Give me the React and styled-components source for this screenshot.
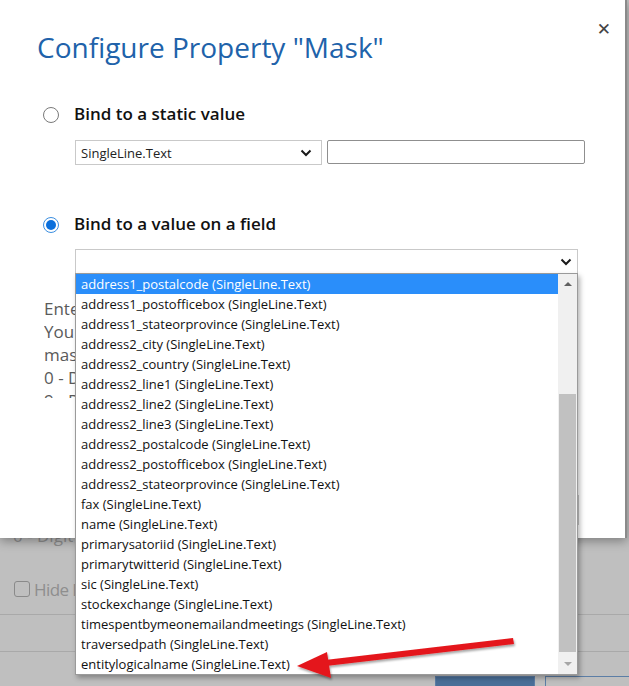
import React from "react"
import styled, { createGlobalStyle } from "styled-components"

const GlobalStyle = createGlobalStyle`
  html, body {
    margin: 0;
    padding: 0;
  }
  body {
    font-family: "Segoe UI", "Open Sans", sans-serif;
    background: #bfbfbf;
    overflow: hidden;
  }
`

const Screen = styled.div`
  position: relative;
  width: 629px;
  height: 686px;
  overflow: hidden;
  background: #bfbfbf;
`

// page behind the modal (dimmed)
const BackPage = styled.div`
  display: flex;
  flex-direction: column;
  padding-top: 525px;
  color: #8e8e8e;
  font-size: 17px;
`
const BackLine = styled.div`
  padding-left: 13px;
  line-height: 22px;
`
const CheckRow = styled.div`
  display: flex;
  align-items: center;
  gap: 4px;
  margin-top: 31px;
  padding-left: 14px;
  height: 22px;
  letter-spacing: -0.6px;
`
const CheckBox = styled.span`
  width: 14px;
  height: 14px;
  border: 1px solid #8a8a8a;
  border-radius: 3px;
`
const Divider = styled.div`
  height: 1px;
  background: #a9a9a9;
  margin-top: ${p => p.$gap}px;
`
const ButtonBar = styled.div`
  display: flex;
  gap: 10px;
  margin-top: 24px;
  padding-left: 435px;
`
const BackButton = styled.div`
  width: 100px;
  height: 30px;
  flex-shrink: 0;
  background: ${p => (p.$primary ? "#4a6f98" : "transparent")};
  border: 1px solid #5c7ea6;
  box-sizing: border-box;
`

// modal
const Dialog = styled.div`
  position: absolute;
  top: 0;
  left: 0;
  width: 627px;
  height: 538px;
  background: #fff;
  border-right: 2px solid #8a8a8a;
  box-sizing: border-box;
  box-shadow: 0 3px 10px rgba(0, 0, 0, 0.35);
`
const Title = styled.h1`
  margin: 0;
  padding: 29px 0 0 37px;
  font-size: 28px;
  line-height: 36px;
  font-weight: 400;
  color: #2062aa;
`
const CloseButton = styled.div`
  position: absolute;
  top: 18px;
  right: 14px;
  font-size: 17px;
  line-height: 22px;
  font-weight: 700;
  color: #444;
  font-family: "DejaVu Sans", sans-serif;
`
const Body = styled.div`
  display: flex;
  flex-direction: column;
  padding-left: 43px;
`
const OptionRow = styled.label`
  display: flex;
  align-items: center;
  gap: 15px;
  height: 24px;
  margin-top: ${p => p.$gap}px;
`
const Radio = styled.span`
  width: 16px;
  height: 16px;
  margin-top: 3px;
  border-radius: 50%;
  box-sizing: border-box;
  border: 1px solid ${p => (p.$checked ? "#3b8ee0" : "#7a7a7a")};
  display: flex;
  align-items: center;
  justify-content: center;
  &::after {
    content: "";
    display: ${p => (p.$checked ? "block" : "none")};
    width: 10px;
    height: 10px;
    border-radius: 50%;
    background: #0a6fdc;
  }
`
const OptionLabel = styled.span`
  font-size: 17px;
  font-weight: 600;
  color: #111;
`
const FieldRow = styled.div`
  display: flex;
  gap: 5px;
  margin-left: 32px;
  margin-top: ${p => p.$gap}px;
`
const SelectBox = styled.div`
  position: relative;
  display: flex;
  align-items: center;
  justify-content: space-between;
  width: ${p => p.$width}px;
  height: ${p => p.$height}px;
  box-sizing: border-box;
  border: 1px solid #c9c9c9;
  padding: 0 ${p => p.$padRight}px 0 5px;
  font-size: 13px;
  color: #222;
`
const TextInput = styled.div`
  width: 258px;
  height: 24px;
  box-sizing: border-box;
  border: 1px solid #8f8f8f;
  border-radius: 2px;
`
const HelpText = styled.div`
  margin-top: 23px;
  margin-left: 1px;
  height: 101px;
  overflow: hidden;
  font-size: 17px;
  line-height: 23px;
  color: #5a5a5a;
`
const DialogFooter = styled.div`
  display: flex;
  justify-content: flex-end;
  padding-right: 46px;
  margin-top: 97px;
`
const FooterButton = styled.div`
  width: 100px;
  height: 30px;
  box-sizing: border-box;
  border: 1px solid #c9c9c9;
`

// dropdown list
const DropList = styled.div`
  position: absolute;
  top: 100%;
  left: -1px;
  width: 503px;
  box-sizing: border-box;
  display: flex;
  background: #fff;
  border: 1px solid #9a9a9a;
  box-shadow: 2px 3px 5px rgba(0, 0, 0, 0.3);
  z-index: 5;
`
const Items = styled.div`
  flex: 1;
  display: flex;
  flex-direction: column;
`
const Item = styled.div`
  height: 20px;
  line-height: 20px;
  padding-left: 5px;
  font-size: 13px;
  white-space: nowrap;
  color: ${p => (p.$selected ? "#fff" : "#111")};
  background: ${p => (p.$selected ? "#2a8efa" : "transparent")};
`
const ScrollBar = styled.div`
  width: 19px;
  display: flex;
  flex-direction: column;
  background: #f0f0f0;
`
const ScrollArrow = styled.div`
  height: 20px;
  display: flex;
  align-items: center;
  justify-content: center;
  &::after {
    content: "";
    border-left: 4px solid transparent;
    border-right: 4px solid transparent;
    ${p =>
      p.$up
        ? "border-bottom: 4px solid #606060;"
        : "border-top: 4px solid #a6a6a6;"}
  }
`
const Track = styled.div`
  flex: 1;
  display: flex;
  flex-direction: column;
`
const Thumb = styled.div`
  margin: 0 1px;
  background: #c1c1c1;
`

const Annotation = styled.svg`
  position: absolute;
  top: 0;
  left: 0;
  pointer-events: none;
  z-index: 10;
`

const fields = [
  "address1_postalcode",
  "address1_postofficebox",
  "address1_stateorprovince",
  "address2_city",
  "address2_country",
  "address2_line1",
  "address2_line2",
  "address2_line3",
  "address2_postalcode",
  "address2_postofficebox",
  "address2_stateorprovince",
  "fax",
  "name",
  "primarysatoriid",
  "primarytwitterid",
  "sic",
  "stockexchange",
  "timespentbymeonemailandmeetings",
  "traversedpath",
  "entitylogicalname",
]

const Chevron = () => (
  <svg width="12" height="8" viewBox="0 0 12 8">
    <polyline points="1.5,1.5 6,6 10.5,1.5" fill="none" stroke="#1a1a1a" strokeWidth="2" />
  </svg>
)

const App = () => {
  // scroll thumb sits near the bottom of the track (list scrolled down)
  const thumbTop = 100
  const thumbHeight = 258

  return (
    <Screen>
      <GlobalStyle />
      <BackPage>
        <BackLine>0 - Digit</BackLine>
        <CheckRow>
          <CheckBox />
          <span>Hide Digits</span>
        </CheckRow>
        <Divider $gap={14} />
        <Divider $gap={36} />
        <ButtonBar>
          <BackButton $primary />
          <BackButton />
        </ButtonBar>
      </BackPage>

      <Dialog>
        <Title>Configure Property "Mask"</Title>
        <CloseButton>✕</CloseButton>
        <Body>
          <OptionRow $gap={36}>
            <Radio />
            <OptionLabel>Bind to a static value</OptionLabel>
          </OptionRow>
          <FieldRow $gap={15}>
            <SelectBox $width={247} $height={25} $padRight={9}>
              <span>SingleLine.Text</span>
              <Chevron />
            </SelectBox>
            <TextInput />
          </FieldRow>

          <OptionRow $gap={46}>
            <Radio $checked />
            <OptionLabel>Bind to a value on a field</OptionLabel>
          </OptionRow>
          <FieldRow $gap={14}>
            <SelectBox $width={503} $height={25} $padRight={5}>
              <span />
              <Chevron />
              <DropList>
                <Items>
                  {fields.map((f, i) => (
                    <Item key={f} $selected={i === 0}>
                      {f} (SingleLine.Text)
                    </Item>
                  ))}
                </Items>
                <ScrollBar>
                  <ScrollArrow $up />
                  <Track>
                    <Thumb style={{ marginTop: thumbTop, height: thumbHeight }} />
                  </Track>
                  <ScrollArrow />
                </ScrollBar>
              </DropList>
            </SelectBox>
          </FieldRow>

          <HelpText>
            Enter the mask that will be applied to the field.
            <br />
            You can use the following characters to build the
            <br />
            mask:
            <br />
            0 - Digit
            <br />
            9 - Digit or space
          </HelpText>
          <DialogFooter>
            <FooterButton />
          </DialogFooter>
        </Body>
      </Dialog>

      <Annotation width="629" height="686" viewBox="0 0 629 686">
        <defs>
          <filter id="sh" x="-10%" y="-50%" width="120%" height="200%">
            <feDropShadow dx="1" dy="2" stdDeviation="1.2" floodColor="#000" floodOpacity="0.35" />
          </filter>
        </defs>
        <g filter="url(#sh)" fill="#e4191c" stroke="none">
          <polygon points="513,638 514,644 326,666 325,660" />
          <polygon points="297,666 327,652 331,678" />
        </g>
      </Annotation>
    </Screen>
  )
}

export default App
